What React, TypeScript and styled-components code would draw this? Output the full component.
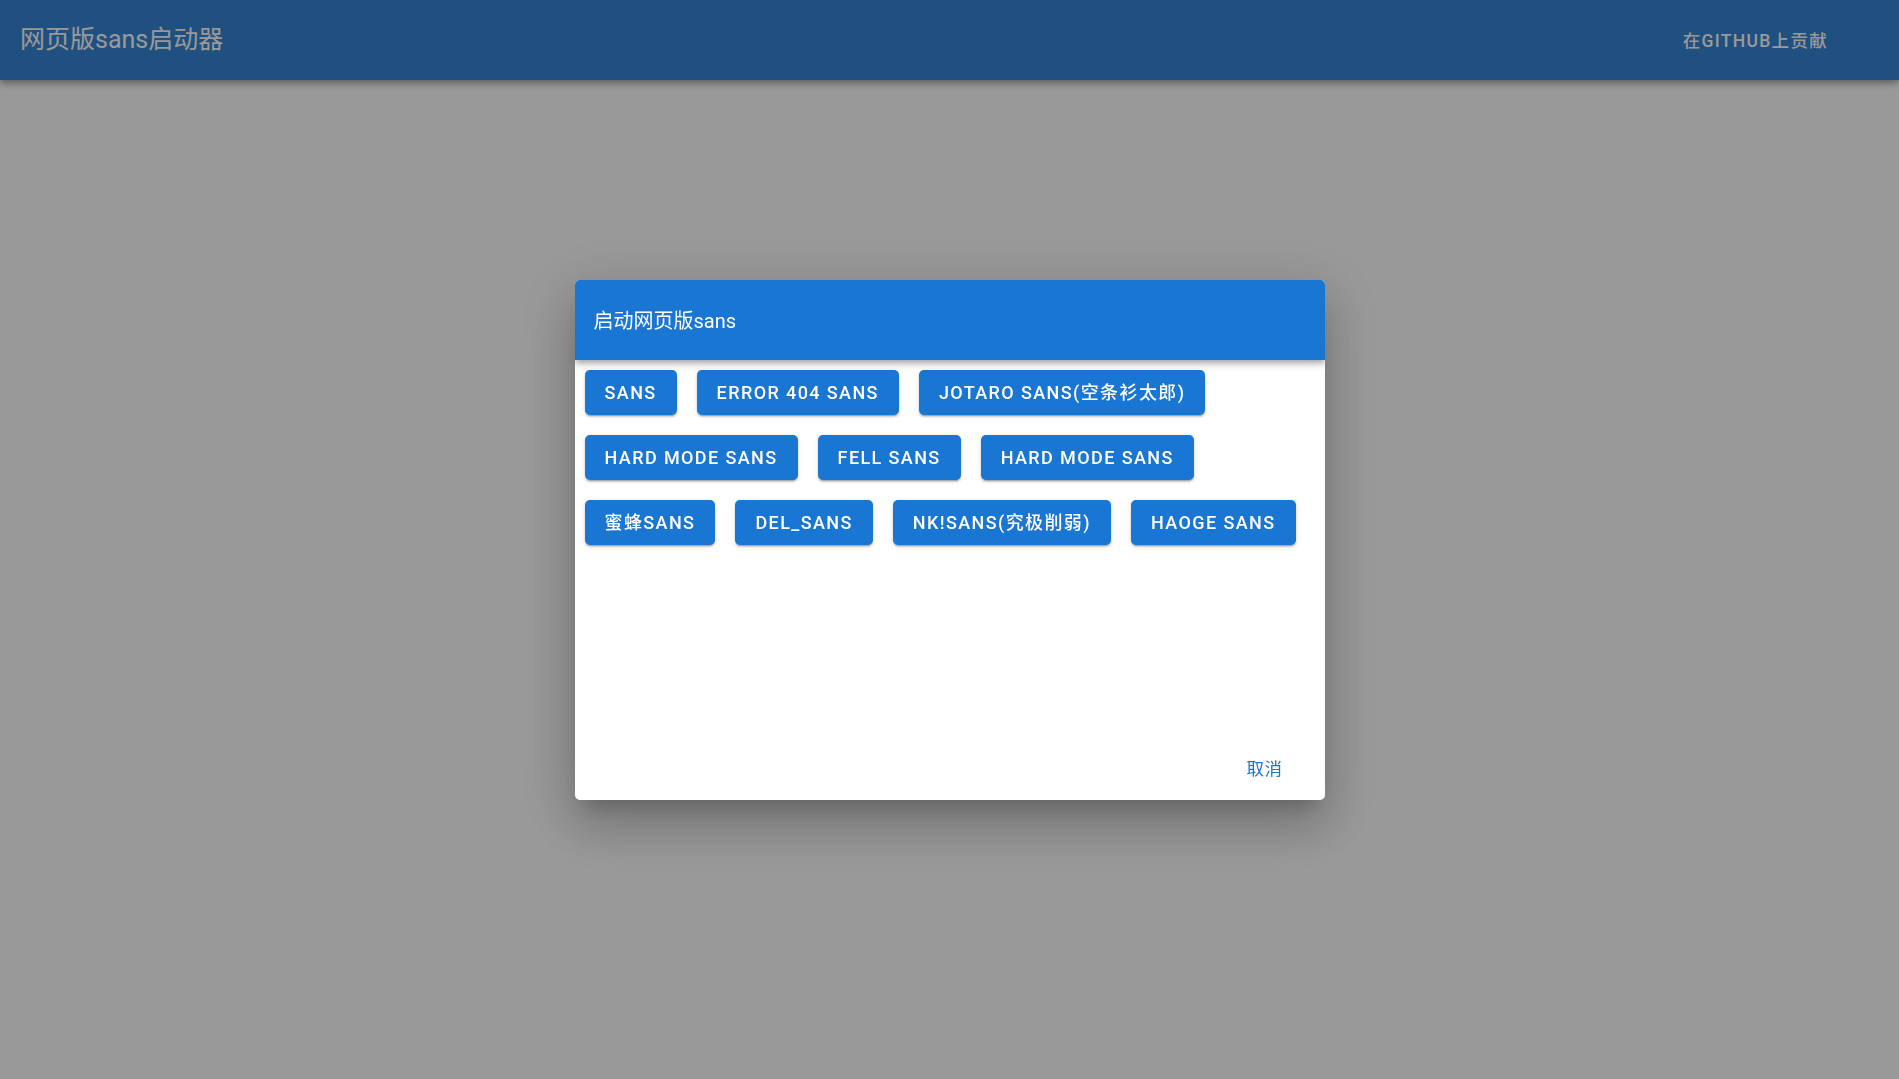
import React from "react";
import styled, { createGlobalStyle } from "styled-components";

const GlobalStyle = createGlobalStyle`
  html, body { margin: 0; padding: 0; background: #ffffff; }
  body { font-family: Roboto, "Noto Sans CJK SC", "Noto Sans", sans-serif; }
  * { box-sizing: border-box; }
`;

const FONT = `Roboto, "Noto Sans CJK SC", "Noto Sans", sans-serif`;

const Page = styled.div`
  width: 100%;
  min-height: 1079px;
  background: #ffffff;
`;

const AppBar = styled.header`
  height: 80px;
  display: flex;
  align-items: center;
  justify-content: space-between;
  padding: 0 20px;
  background: #3485d5;
  color: #ffffff;
  box-shadow: 0px 2.5px 5px -1px rgba(0,0,0,0.2), 0px 5px 6px 0px rgba(0,0,0,0.14), 0px 1px 12px 0px rgba(0,0,0,0.12);
`;

const AppTitle = styled.h1`
  margin: 0;
  font-family: ${FONT};
  font-size: 25px;
  font-weight: 400;
  line-height: 1.6;
`;

const GithubLink = styled.a`
  font-family: ${FONT};
  font-size: 17.5px;
  font-weight: 500;
  letter-spacing: 1.3px;
  text-transform: uppercase;
  color: inherit;
  text-decoration: none;
  padding: 8.5px 20px 6.5px;
  margin-right: 31px;
  line-height: 1.75;
`;

const Backdrop = styled.div`
  position: fixed;
  inset: 0;
  background: rgba(0, 0, 0, 0.4);
  display: flex;
  align-items: center;
  justify-content: center;
`;

const Dialog = styled.div`
  width: 750px;
  background: #ffffff;
  border-radius: 5px;
  overflow: hidden;
  display: flex;
  flex-direction: column;
  box-shadow: 0px 14px 19px -9px rgba(0,0,0,0.2), 0px 30px 48px 4px rgba(0,0,0,0.14), 0px 11px 58px 10px rgba(0,0,0,0.12);
`;

const DialogBar = styled.div`
  height: 80px;
  display: flex;
  align-items: center;
  padding: 0 19px;
  background: #1976d2;
  color: #ffffff;
  font-family: ${FONT};
  font-size: 20px;
  font-weight: 400;
  position: relative;
  z-index: 1;
  box-shadow: 0px 2.5px 5px -1px rgba(0,0,0,0.2), 0px 5px 6px 0px rgba(0,0,0,0.14), 0px 1px 12px 0px rgba(0,0,0,0.12);
`;

const DialogBody = styled.div`
  min-height: 375px;
  display: flex;
  flex-wrap: wrap;
  align-content: flex-start;
  padding: 0;
`;

const SansButton = styled.button`
  margin: 10px;
  height: 45px;
  min-width: 80px;
  padding: 1px 20px 0;
  border: none;
  border-radius: 5px;
  background: #1976d2;
  color: #ffffff;
  font-family: ${FONT};
  font-size: 18px;
  font-weight: 500;
  letter-spacing: 1.4px;
  text-transform: uppercase;
  line-height: 1.75;
  cursor: pointer;
  box-shadow: 0px 3px 1px -2px rgba(0,0,0,0.2), 0px 2px 2px 0px rgba(0,0,0,0.14), 0px 1px 5px 0px rgba(0,0,0,0.12);
`;

const DialogActions = styled.div`
  display: flex;
  justify-content: flex-end;
  align-items: center;
  padding: 10px 20px 10px;
`;

const TextButton = styled.button`
  min-width: 80px;
  height: 45px;
  padding: 0 10px;
  border: none;
  background: transparent;
  color: #1976d2;
  font-family: ${FONT};
  font-size: 17.5px;
  font-weight: 400;
  letter-spacing: 0.5px;
  cursor: pointer;
`;

const SANS_LIST = [
  "sans",
  "error 404 sans",
  "jotaro sans(空条衫太郎)",
  "hard mode sans",
  "fell sans",
  "hard mode sans",
  "蜜蜂sans",
  "del_sans",
  "nk!sans(究极削弱)",
  "haoge sans",
];

export default function App() {
  return (
    <>
      <GlobalStyle />
      <Page>
        <AppBar>
          <AppTitle>网页版sans启动器</AppTitle>
          <GithubLink href="#">在github上贡献</GithubLink>
        </AppBar>
      </Page>
      <Backdrop>
        <Dialog role="dialog">
          <DialogBar>启动网页版sans</DialogBar>
          <DialogBody>
            {SANS_LIST.map((s, i) => (
              <SansButton key={i}>{s}</SansButton>
            ))}
          </DialogBody>
          <DialogActions>
            <TextButton>取消</TextButton>
          </DialogActions>
        </Dialog>
      </Backdrop>
    </>
  );
}
